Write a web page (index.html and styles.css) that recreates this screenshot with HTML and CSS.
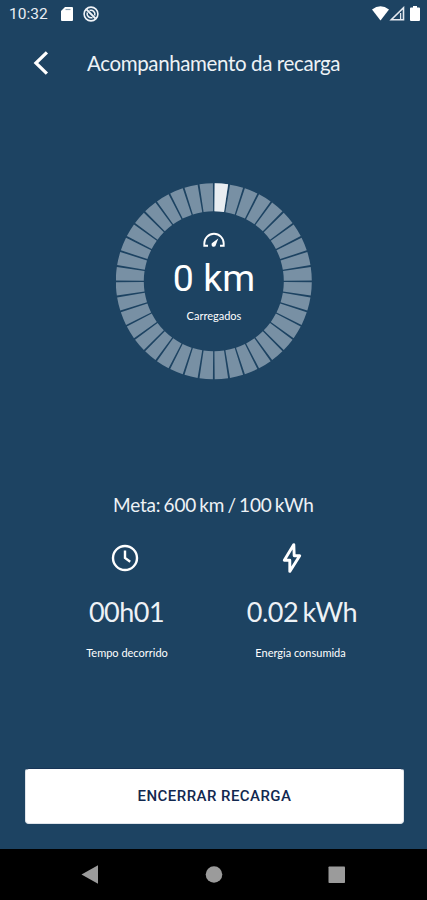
FILE: index.html
```html
<!DOCTYPE html>
<html lang="pt-BR">
<head>
    <meta charset="UTF-8">
    <meta name="viewport" content="width=device-width, initial-scale=1.0">
    <title>Acompanhamento da recarga</title>
    <link rel="stylesheet" href="styles.css">
</head>
<body>

    <!-- Barra de status -->
    <div class="status-bar">
        <span class="hora">10:32</span>
        <svg class="icon-sd" width="12" height="14" viewBox="0 0 12 14">
            <path d="M4 0h7a1 1 0 0 1 1 1v12a1 1 0 0 1-1 1H1a1 1 0 0 1-1-1V4z" fill="#fff"/>
            <path d="M4.500 2.500h5" stroke="#8da1b2" stroke-width="1.200"/>
        </svg>
        <svg class="icon-sync" width="16" height="16" viewBox="0 0 16 16" fill="none" stroke="#f1f4f8">
            <circle cx="8" cy="8" r="6.900" stroke-width="1.600"/>
            <path d="M3.500 3.500l9 9" stroke-width="1.800"/>
            <path d="M6.500 4.500a4 4 0 0 1 5.200 5M9.500 11.500a4 4 0 0 1-5.200-5" stroke-width="1.500"/>
        </svg>
        <svg class="icon-sinais" width="50" height="16" viewBox="0 0 50 16">
            <path d="M0 3.600Q8.500-3 17 3.600L8.500 14.500z" fill="#fff"/>
            <path d="M31.500 1.800v12H19.300z" fill="none" stroke="#e5eaf0" stroke-width="1.600"/>
            <path d="M28.600 7v6.500" stroke="#e5eaf0" stroke-width="1.300"/>
            <path d="M41 0h4v1.500h2a1 1 0 0 1 1 1V14a1 1 0 0 1-1 1h-8a1 1 0 0 1-1-1V2.500a1 1 0 0 1 1-1h2z" fill="#fff"/>
        </svg>
    </div>

    <div class="header">
        <svg class="voltar" width="18" height="26" viewBox="0 0 18 26">
            <path d="M14.900 2.300L3.900 13l11 10.700" fill="none" stroke="#fff" stroke-width="3.200"/>
        </svg>
        <h1>Acompanhamento da recarga</h1>
    </div>

    <!-- Medidor de km carregados -->
    <div class="medidor">
        <svg class="anel" width="196" height="197" viewBox="0 0 196 197" fill="none" stroke-width="28">
            <circle cx="97.800" cy="98.300" r="84" stroke="#7890a4" pathLength="400" stroke-dasharray="8.800 1.200" stroke-dashoffset="-.6" transform="rotate(-90 97.800 98.300)"/>
            <circle cx="97.800" cy="98.300" r="84" stroke="#e9edf1" pathLength="400" stroke-dasharray="8.800 391.200" stroke-dashoffset="-.6" transform="rotate(-90 97.800 98.300)"/>
        </svg>
        <div class="medidor-info">
            <svg width="24" height="16" viewBox="0 0 24 16">
                <path d="M6 13.800H2.300V11.500a9.700 9.700 0 0 1 19.400 0v2.300H18" fill="none" stroke="#fff" stroke-width="1.900"/>
                <path d="M16.300 6.500l-2.400 6.300a2.200 2.200 0 1 1-3.100-2.200z" fill="#fff"/>
            </svg>
            <p class="km">0 km</p>
            <p class="legenda">Carregados</p>
        </div>
    </div>

    <p class="meta">Meta: 600 km / 100 kWh</p>

    <div class="dados">
        <div class="dado">
            <svg width="28" height="32" viewBox="0 0 28 32" fill="none" stroke="#fff">
                <circle cx="14" cy="16" r="12" stroke-width="2.400"/>
                <path d="M14 8.500V16l5.200 3.800" stroke-width="2.400"/>
            </svg>
            <p class="valor">00h01</p>
            <p class="legenda tempo">Tempo decorrido</p>
        </div>
        <div class="dado">
            <svg class="raio" width="22" height="32" viewBox="0 0 22 32">
                <path d="M12.800 2.600L3.300 18.300h5.500V29.400L18.700 13.700h-5.500z" fill="none" stroke="#fff" stroke-width="2.900" stroke-linejoin="round"/>
            </svg>
            <p class="valor">0.02 kWh</p>
            <p class="legenda">Energia consumida</p>
        </div>
    </div>

    <button class="encerrar">ENCERRAR RECARGA</button>

    <!-- Navegação do sistema -->
    <div class="nav-bar">
        <svg width="427" height="51" viewBox="0 0 427 51" fill="#9b9b9b">
            <path d="M81.500 25.500L98 16.300v18.400z"/>
            <circle cx="214" cy="25.500" r="8.300"/>
            <rect x="328.500" y="17.500" width="16.500" height="16.500" rx=".8"/>
        </svg>
    </div>

</body>
</html>
```
FILE: styles.css
```css
* {
    box-sizing: border-box;
}
body {
    margin: 0;
    height: 900px;
    display: flex;
    flex-direction: column;
    overflow: hidden;
    background-color: #1d4362;
    color: #fff;
    font-family: Lato, sans-serif;
}
p, h1 {
    margin: 0;
    white-space: nowrap;
}
svg {
    display: block;
    flex: none;
}
.status-bar {
    display: flex;
    align-items: center;
    height: 28px;
    padding: 0 5px 0 9px;
}
.hora {
    width: 52px;
    font-family: Roboto, sans-serif;
    font-size: 15.5px;
    color: #e9eef3;
}
.icon-sync {
    margin-left: 10px;
}
.icon-sinais {
    margin-left: auto;
}
.header {
    display: flex;
    align-items: center;
    height: 70px;
    padding-left: 32px;
}
.header h1 {
    margin-left: 37px;
    font-size: 20.5px;
    font-weight: 400;
    letter-spacing: -0.37px;
    color: #eef2f6;
}
.voltar {
    margin-bottom: 1px;
}
.medidor {
    display: grid;
    width: 196px;
    height: 196px;
    margin: 85px 0 0 116px;
}
.anel, .medidor-info {
    grid-area: 1 / 1;
}
.medidor-info {
    display: flex;
    flex-direction: column;
    align-items: center;
    padding-top: 49px;
}
.km {
    margin-top: 8px;
    font-family: Roboto, sans-serif;
    font-size: 37.5px;
    line-height: 44px;
}
.legenda {
    font-size: 11px;
    line-height: 14px;
    color: #fff;
}
.medidor .legenda {
    margin-top: 9px;
}
.meta {
    margin: 114px 0 0 113px;
    font-size: 19px;
    line-height: 24px;
    letter-spacing: -0.2px;
    word-spacing: -1.4px;
    color: #eef2f6;
}
.dados {
    display: flex;
    margin: 25px 0 0 38px;
}
.dado {
    display: flex;
    flex-direction: column;
    align-items: center;
    width: 177px;
}
.dado:first-child {
    width: 174px;
}
.raio {
    margin-right: 18px;
}
.valor {
    margin-top: 21px;
    margin-left: 3px;
    font-size: 27px;
    line-height: 34px;
    letter-spacing: -0.5px;
    word-spacing: -2px;
    color: #eef2f6;
}
.dado .legenda {
    margin-top: 17px;
}
.tempo {
    margin-left: 4px;
}
.encerrar {
    width: 379px;
    height: 56px;
    margin: auto 0 25px 25px;
    padding: 0 0 1px;
    border: 1px solid #dfe4ea;
    border-top-color: #173456;
    border-radius: 4px;
    background-color: #fff;
    color: #12284f;
    font-family: Roboto, sans-serif;
    font-size: 15px;
    font-weight: 500;
    letter-spacing: 0.45px;
}
.nav-bar {
    height: 51px;
    background-color: #000;
}
```
